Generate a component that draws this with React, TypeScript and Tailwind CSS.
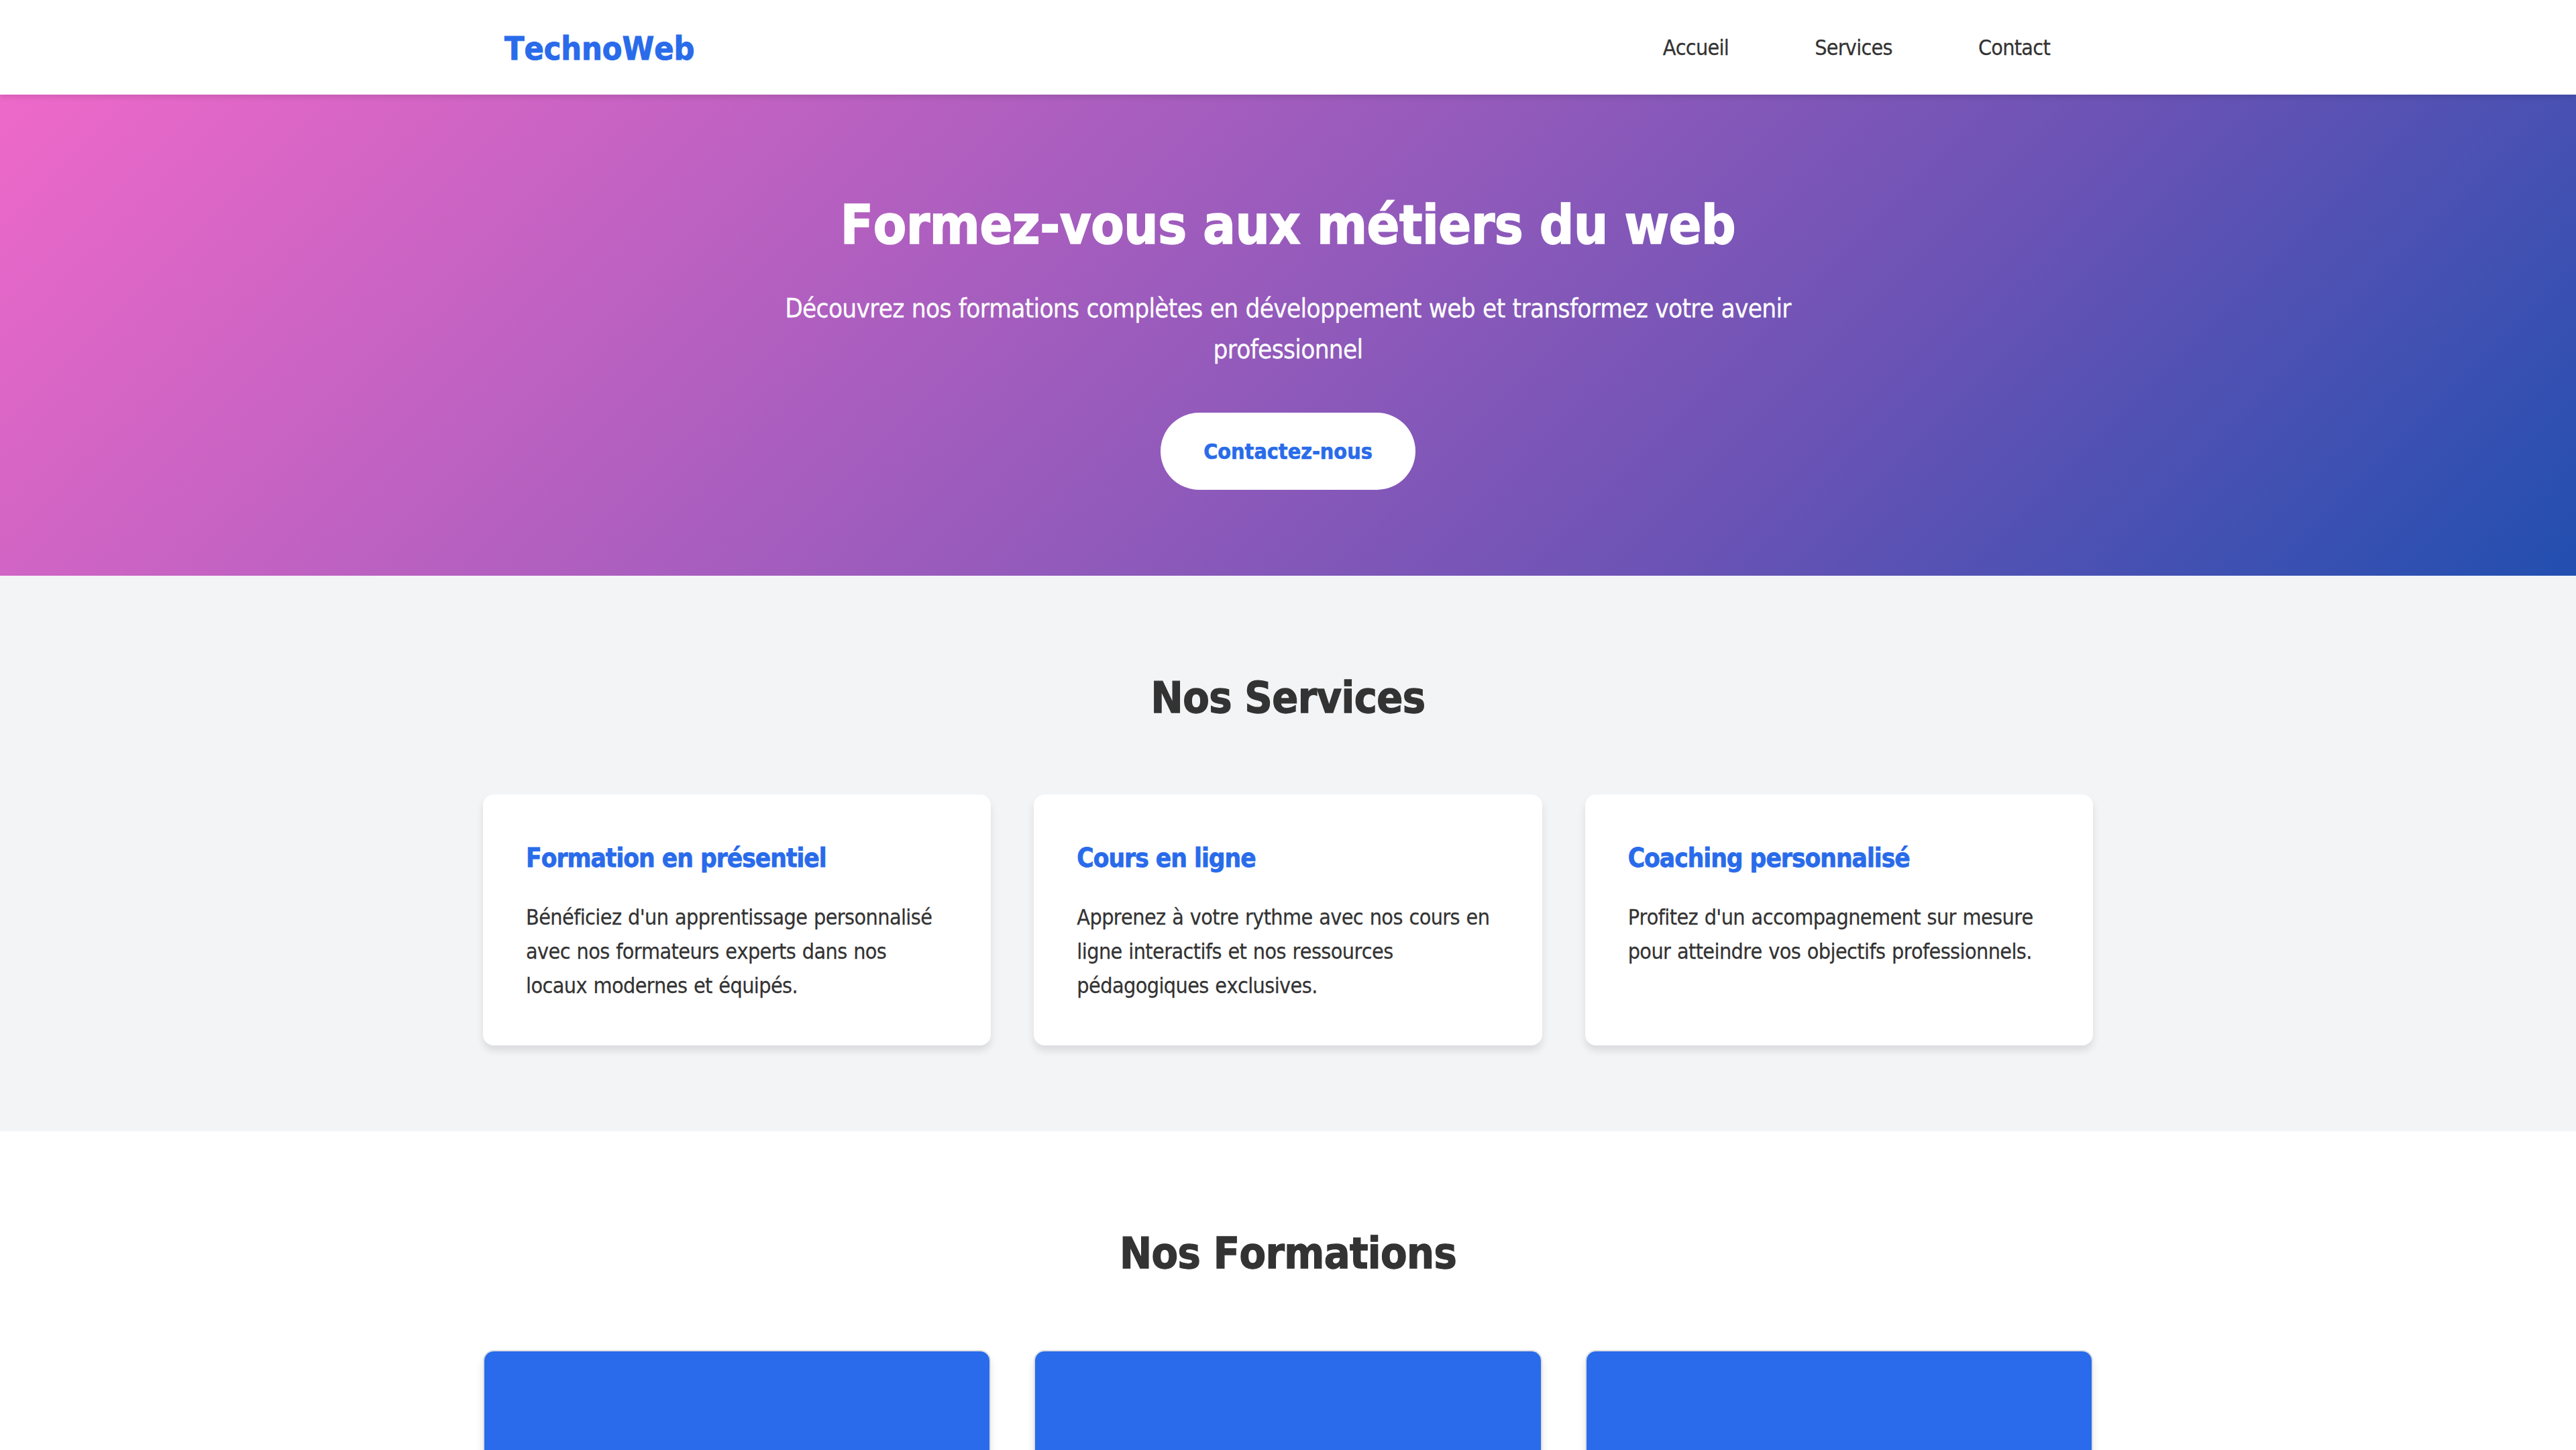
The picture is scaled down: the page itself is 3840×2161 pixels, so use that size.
const navLinks = [
  { label: "Accueil", href: "#accueil" },
  { label: "Services", href: "#services" },
  { label: "Contact", href: "#contact" },
];

const services = [
  {
    title: "Formation en présentiel",
    text: "Bénéficiez d'un apprentissage personnalisé avec nos formateurs experts dans nos locaux modernes et équipés.",
  },
  {
    title: "Cours en ligne",
    text: "Apprenez à votre rythme avec nos cours en ligne interactifs et nos ressources pédagogiques exclusives.",
  },
  {
    title: "Coaching personnalisé",
    text: "Profitez d'un accompagnement sur mesure pour atteindre vos objectifs professionnels.",
  },
];

const formations = ["html", "javascript", "react"];

const SectionTitle = ({ children }: { children: string }) => (
  <h2 className="mb-[90px] text-center text-[64px] leading-[108px] font-bold tracking-[-0.009em] [-webkit-text-stroke:0.02em]">
    {children}
  </h2>
);

const Header = () => (
  <header className="relative z-10 h-[141px] bg-white shadow-[0_4px_8px_rgba(0,0,0,0.1)]">
    <nav className="mx-auto flex h-full max-w-[2400px] items-center justify-between px-8 pt-[3px]">
      <div className="text-[48px] leading-[77px] font-bold text-[#296bea] [-webkit-text-stroke:0.02em]">
        TechnoWeb
      </div>
      <ul className="flex gap-16 tracking-[-0.022em]">
        {navLinks.map((link) => (
          <li key={link.label}>
            <a href={link.href} className="block px-8">
              {link.label}
            </a>
          </li>
        ))}
      </ul>
    </nav>
  </header>
);

const Hero = () => (
  <section
    id="accueil"
    className="flex h-[717px] flex-col items-center bg-linear-[135deg,#ee69c9,#925abb_50%,#6b53b5_70%,#224fb0] pt-32 text-center text-white"
  >
    <h1 className="mb-[26px] text-[80px] leading-[134px] font-bold tracking-[-0.005em] [-webkit-text-stroke:0.02em]">
      Formez-vous aux métiers du web
    </h1>
    <p className="mb-16 w-[1600px] text-[38.4px] leading-[61px] tracking-[-0.018em] [word-spacing:0.8px]">
      Découvrez nos formations complètes en développement web et transformez votre avenir professionnel
    </p>
    <a
      href="#contact"
      className="flex h-[115px] w-[380px] items-center justify-center rounded-full bg-white pt-0.5 font-bold text-[#296bea] [-webkit-text-stroke:0.02em]"
    >
      Contactez-nous
    </a>
  </section>
);

const Services = () => (
  <section id="services" className="h-[828px] bg-[#f3f4f6] pt-32">
    <SectionTitle>Nos Services</SectionTitle>
    <div className="mx-auto grid max-w-[2400px] grid-cols-3 gap-16">
      {services.map((service) => (
        <div
          key={service.title}
          className="h-[374px] rounded-2xl bg-white p-16 shadow-[0_8px_12px_rgba(0,0,0,0.1)]"
        >
          <h3 className="mb-[33px] text-[38.4px] leading-[61px] font-bold tracking-[-0.025em] text-[#296bea] [-webkit-text-stroke:0.02em]">
            {service.title}
          </h3>
          <p className="tracking-[-0.018em] [word-spacing:1px]">{service.text}</p>
        </div>
      ))}
    </div>
  </section>
);

const Formations = () => (
  <section id="formations" className="h-[475px] overflow-hidden bg-white pt-32">
    <SectionTitle>Nos Formations</SectionTitle>
    <div className="mx-auto grid max-w-[2400px] grid-cols-3 gap-16">
      {formations.map((formation) => (
        <div
          key={formation}
          className="overflow-hidden rounded-2xl border-2 border-[#dddee1] bg-white shadow-[0_8px_12px_rgba(0,0,0,0.1)]"
        >
          <div className="h-[400px] bg-[#296bea]" />
        </div>
      ))}
    </div>
  </section>
);

export default function App() {
  return (
    <div className="h-[2161px] overflow-hidden bg-white font-['DejaVu_Sans_Condensed','DejaVu_Sans',sans-serif] text-[32px] leading-[51.2px] text-[#333] [-webkit-text-stroke:0.008em] [font-kerning:none] [font-stretch:condensed]">
      <Header />
      <Hero />
      <Services />
      <Formations />
    </div>
  );
}
